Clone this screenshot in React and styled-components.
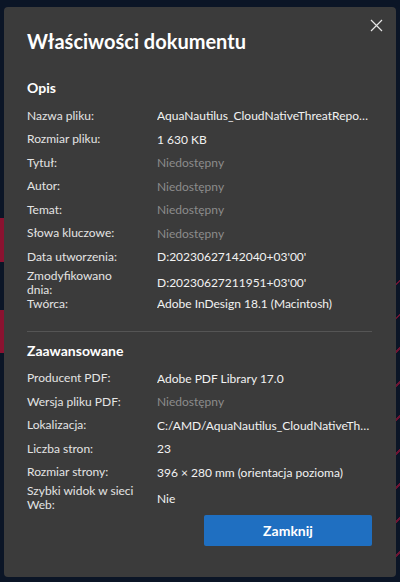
import React from "react";
import styled, { createGlobalStyle } from "styled-components";

const Global = createGlobalStyle`
  html, body { margin: 0; padding: 0; }
  body {
    background: #0b1526;
    font-family: "Segoe UI", Lato, "Open Sans", sans-serif;
  }
`;

const Backdrop = styled.div`
  position: relative;
  width: 400px;
  height: 582px;
  box-sizing: border-box;
  padding: 7px 4px 5px 4px;
  overflow: hidden;
  background-color: #0b1526;
  background-image:
    linear-gradient(#8a1230, #8a1230),
    linear-gradient(#8a1230, #8a1230),
    repeating-linear-gradient(135deg, transparent 0 22px, rgba(190, 20, 60, 0.55) 22px 24px);
  background-size: 4px 44px, 4px 43px, 8px 330px;
  background-position: 0 218px, 0 310px, 396px 252px;
  background-repeat: no-repeat;
`;

const Dialog = styled.div`
  position: relative;
  width: 392px;
  height: 570px;
  box-sizing: border-box;
  background: #3b3b3b;
  border-radius: 4px;
  padding: 20px 24px 0 23px;
  color: #e8e8e8;
  display: flex;
  flex-direction: column;
`;

const CloseButton = styled.button`
  position: absolute;
  top: 10px;
  right: 12px;
  width: 16px;
  height: 16px;
  padding: 0;
  border: 0;
  background: transparent;
  display: flex;
  align-items: center;
  justify-content: center;
  cursor: pointer;
`;

const Title = styled.h1`
  margin: 0;
  font-size: 20px;
  line-height: 28px;
  font-weight: 700;
  color: #ffffff;
`;

const SectionTitle = styled.h2`
  margin: ${(p) => (p.$first ? "23px" : "9px")} 0 6px 0;
  font-size: 14px;
  line-height: 20px;
  font-weight: 700;
  color: #ffffff;
`;

const Rows = styled.div`
  display: flex;
  flex-direction: column;
`;

const Row = styled.div`
  display: grid;
  grid-template-columns: 130px 1fr;
  align-items: center;
  height: 23.5px;
  font-size: 12px;
`;

const Label = styled.div`
  color: #e4e4e4;
  line-height: 14px;
  padding-right: 22px;
`;

const Value = styled.div`
  color: ${(p) => (p.$muted ? "#8c8c8c" : "#f2f2f2")};
  line-height: 15px;
  white-space: nowrap;
  overflow: hidden;
  text-overflow: ellipsis;
`;

const Divider = styled.hr`
  margin: 15px 0 0 0;
  border: 0;
  height: 1px;
  background: #555555;
`;

const Footer = styled.div`
  display: flex;
  justify-content: flex-end;
  margin-top: 7px;
`;

const PrimaryButton = styled.button`
  width: 168px;
  height: 31.5px;
  border: 0;
  border-radius: 2px;
  background: #1f6fc1;
  color: #ffffff;
  font-family: inherit;
  font-size: 14px;
  font-weight: 700;
  cursor: pointer;
`;

const NA = "Niedostępny";

const general = [
  ["Nazwa pliku:", "AquaNautilus_CloudNativeThreatReport_2023.pdf"],
  ["Rozmiar pliku:", "1 630 KB"],
  ["Tytuł:", NA],
  ["Autor:", NA],
  ["Temat:", NA],
  ["Słowa kluczowe:", NA],
  ["Data utworzenia:", "D:20230627142040+03'00'"],
  ["Zmodyfikowano dnia:", "D:20230627211951+03'00'"],
  ["Twórca:", "Adobe InDesign 18.1 (Macintosh)"],
];

const advanced = [
  ["Producent PDF:", "Adobe PDF Library 17.0"],
  ["Wersja pliku PDF:", NA],
  ["Lokalizacja:", "C:/AMD/AquaNautilus_CloudNativeThreatReport_2023.pdf"],
  ["Liczba stron:", "23"],
  ["Rozmiar strony:", "396 × 280 mm (orientacja pozioma)"],
  ["Szybki widok w sieci Web:", "Nie"],
];

function PropRows({ items }) {
  return (
    <Rows>
      {items.map(([label, value]) => (
        <Row key={label}>
          <Label>{label}</Label>
          <Value $muted={value === NA}>{value}</Value>
        </Row>
      ))}
    </Rows>
  );
}

export default function App() {
  return (
    <>
      <Global />
      <Backdrop>
        <Dialog role="dialog" aria-label="Właściwości dokumentu">
          <CloseButton aria-label="Zamknij">
            <svg width="13" height="13" viewBox="0 0 13 13" fill="none">
              <path d="M1 1L12 12M12 1L1 12" stroke="#e6e6e6" strokeWidth="1.2" />
            </svg>
          </CloseButton>
          <Title>Właściwości dokumentu</Title>
          <SectionTitle $first>Opis</SectionTitle>
          <PropRows items={general} />
          <Divider />
          <SectionTitle>Zaawansowane</SectionTitle>
          <PropRows items={advanced} />
          <Footer>
            <PrimaryButton>Zamknij</PrimaryButton>
          </Footer>
        </Dialog>
      </Backdrop>
    </>
  );
}
